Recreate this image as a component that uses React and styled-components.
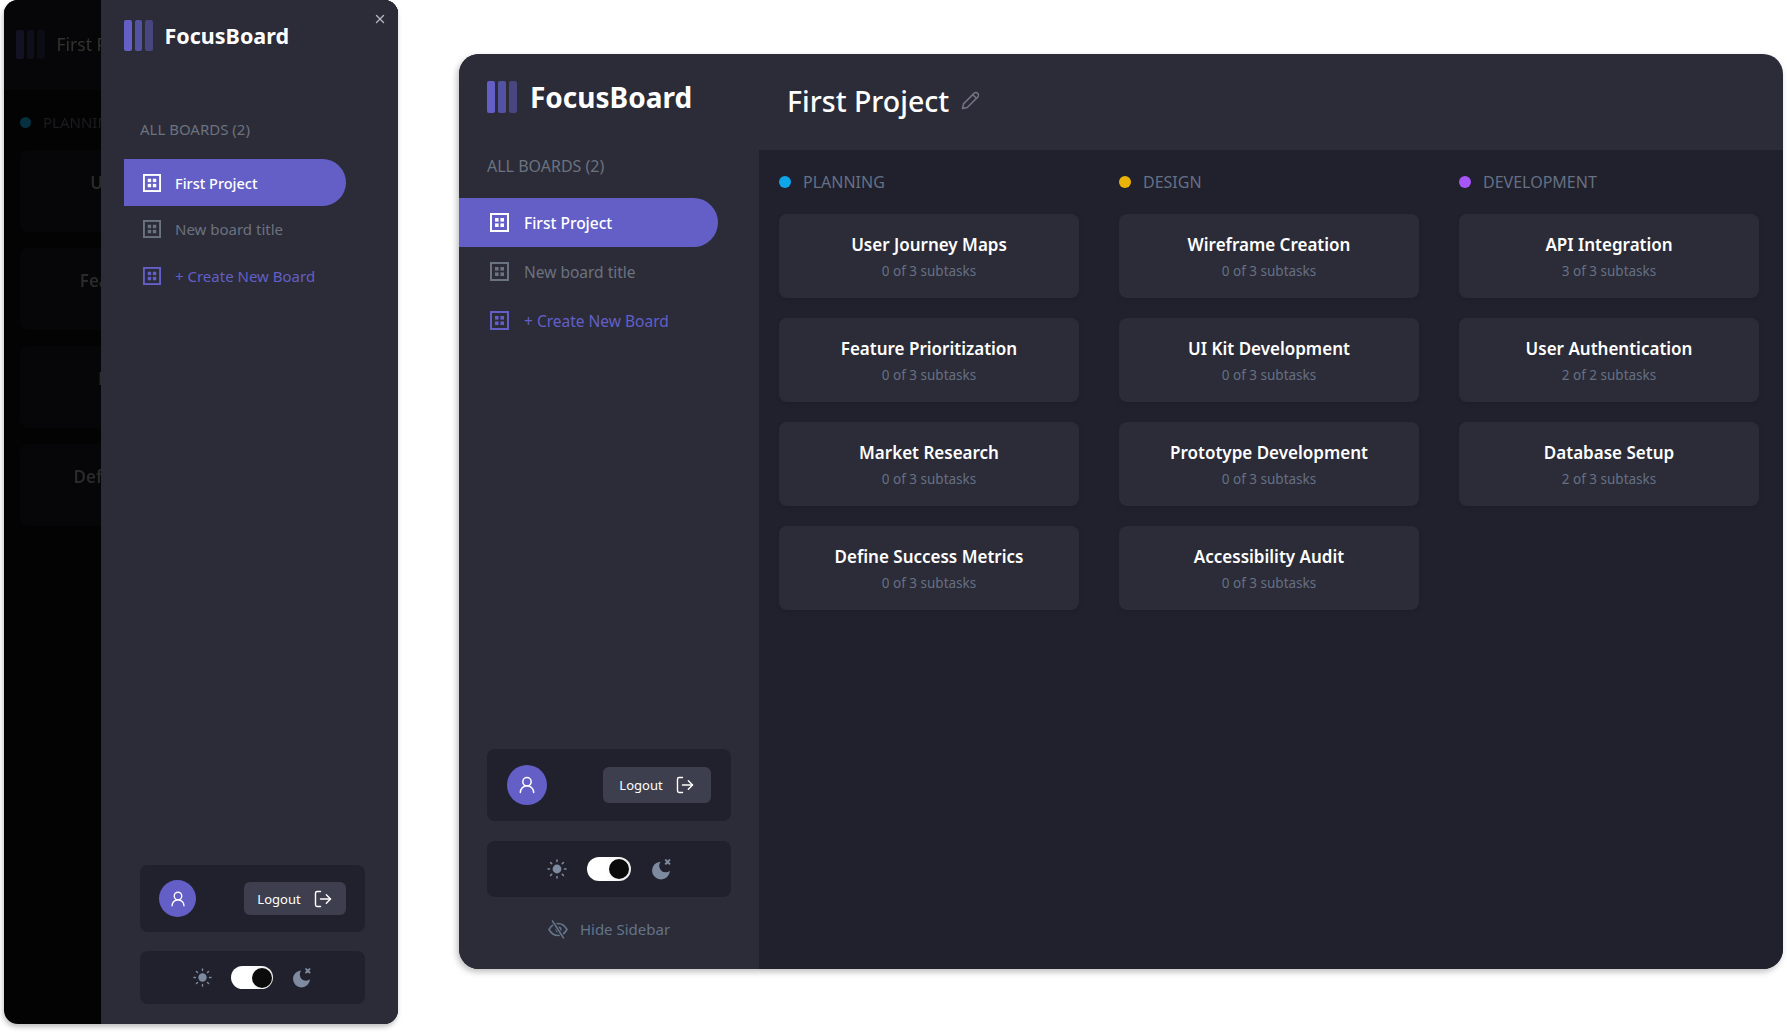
import React from 'react'
import styled, { createGlobalStyle } from 'styled-components'
import { LogOut, UserRound, X } from 'lucide-react'

const GlobalStyle = createGlobalStyle`
  html, body { margin: 0; padding: 0; background: #fff; }
  * { box-sizing: border-box; }
  body { font-family: "Noto Sans", "Open Sans", sans-serif; }
`

const columns = [
  {
    name: 'PLANNING', color: '#0ea5e9',
    tasks: [['User Journey Maps', '0 of 3 subtasks'], ['Feature Prioritization', '0 of 3 subtasks'], ['Market Research', '0 of 3 subtasks'], ['Define Success Metrics', '0 of 3 subtasks']],
  },
  {
    name: 'DESIGN', color: '#eab308',
    tasks: [['Wireframe Creation', '0 of 3 subtasks'], ['UI Kit Development', '0 of 3 subtasks'], ['Prototype Development', '0 of 3 subtasks'], ['Accessibility Audit', '0 of 3 subtasks']],
  },
  {
    name: 'DEVELOPMENT', color: '#a855f7',
    tasks: [['API Integration', '3 of 3 subtasks'], ['User Authentication', '2 of 2 subtasks'], ['Database Setup', '2 of 3 subtasks']],
  },
]

const BoardIcon = ({ size = 19 }) => (
  <svg width={size} height={size} viewBox="0 0 19 19" fill="none">
    <rect x="1" y="1" width="17" height="17" stroke="currentColor" strokeWidth="2" />
    <rect x="5" y="5" width="3.6" height="3.6" fill="currentColor" />
    <rect x="10.4" y="5" width="3.6" height="3.6" fill="currentColor" />
    <rect x="5" y="10.4" width="3.6" height="3.6" fill="currentColor" />
    <rect x="10.4" y="10.4" width="3.6" height="3.6" fill="currentColor" />
  </svg>
)

const SunIcon = ({ size = 20 }) => (
  <svg width={size} height={size} viewBox="0 0 20 20" fill="none" stroke="#7d8aa0" strokeWidth="1.5" strokeLinecap="round">
    <circle cx="10" cy="10" r="4.4" fill="#7d8aa0" stroke="none" />
    <path d="M10 1v1.6M10 17.4V19M1 10h1.6M17.4 10H19M3.6 3.6l1.2 1.2M15.2 15.2l1.2 1.2M3.6 16.4l1.2-1.2M15.2 4.8l1.2-1.2" />
  </svg>
)

const MoonIcon = ({ size = 21 }) => (
  <svg width={size} height={size} viewBox="1 0.5 19 20" fill="none">
    <path d="M9.76 3A8.5 8.5 0 1 0 18.5 11.74 6.2 6.2 0 0 1 9.76 3Z" fill="#7d8aa0" />
    <path d="M14.6 1.6l3.4 3.4M18 1.6l-3.4 3.4" stroke="#7d8aa0" strokeWidth="1.9" strokeLinecap="round" />
  </svg>
)

const PencilIcon = () => (
  <svg width="19" height="19" viewBox="0 0 19 19" fill="none" stroke="#6f7585" strokeWidth="1.5" strokeLinejoin="round">
    <path d="M1.5 17.5l1-4.6L13 2.4a2.6 2.6 0 0 1 3.7 3.7L6.2 16.5Z" />
    <path d="M11.8 3.7l3.6 3.6" />
  </svg>
)

const EyeSlashIcon = () => (
  <svg width="20" height="20" viewBox="0 0 20 20" fill="none" stroke="#64748b" strokeLinecap="round">
    <path d="M1 10.5C3.4 6.2 6.500 4.500 10 4.500s6.600 1.700 9 6c-2.400 4.300-5.500 6-9 6s-6.600-1.700-9-6Z" strokeWidth="1.6" />
    <circle cx="10.500" cy="10.500" r="3.100" fill="#64748b" stroke="none" />
    <path d="M4.500 2l11 17" stroke="#2b2c37" strokeWidth="3.400" />
    <path d="M4.500 2l11 17" strokeWidth="1.500" />
  </svg>
)

const Page = styled.div`
  display: flex;
  align-items: flex-start;
  gap: 61px;
  width: 1787px;
  height: 1032px;
  padding-left: 4px;
  overflow: hidden;
`

/* left: the phone sized view with the sidebar open */
const Phone = styled.div`
  position: relative;
  width: 394px;
  height: 1024px;
  flex-shrink: 0;
  border-radius: 14px;
  overflow: hidden;
  background: #030304;
  box-shadow: -1px 3px 5px rgba(0, 0, 0, 0.25);
  filter: blur(0.35px);
`
const DimHeader = styled.div`
  display: flex;
  align-items: center;
  gap: 12px;
  height: 90px;
  padding: 0 12px 2px;
  background: #060608;
`
const DimTitle = styled.span`
  color: #33332e;
  font-size: 17.5px;
  white-space: nowrap;
`
const DimColumn = styled.div`
  display: flex;
  flex-direction: column;
  gap: 16px;
  padding: 22px 16px;
  width: 328px;
`
const DimLabel = styled.div`
  display: flex;
  align-items: center;
  gap: 12px;
  height: 20px;
  margin-bottom: 2px;
  color: #1c1c20;
  font-size: 15px;
`
const DimDot = styled.span`
  width: 11px;
  height: 11px;
  border-radius: 50%;
  background: #04303f;
`
const DimCard = styled.div`
  display: flex;
  align-items: center;
  justify-content: center;
  width: 296px;
  height: 82px;
  padding-bottom: 18px;
  border-radius: 8px;
  background: #060608;
  color: #2a2a2a;
  font-size: 17px;
  font-weight: 600;
  white-space: nowrap;
`
const Overlay = styled.div`
  position: absolute;
  top: 0;
  bottom: 0;
  left: 97px;
  right: 0;
`
const CloseButton = styled.span`
  position: absolute;
  top: 12px;
  right: 11px;
  color: #b4b6bf;
  display: flex;
`

/* sidebar shared between both views */
const Side = styled.aside`
  display: flex;
  flex-direction: column;
  flex-shrink: 0;
  width: ${p => (p.$compact ? '297px' : '300px')};
  height: 100%;
  background: #2b2c37;
`
const Brand = styled.div`
  display: flex;
  align-items: center;
  gap: ${p => (p.$compact ? '12px' : '13px')};
  height: ${p => (p.$compact ? '31px' : '32px')};
  margin: ${p => (p.$compact ? '20px 0 0 23px' : '27px 0 0 28px')};
`
const Bars = styled.div`
  display: flex;
  gap: 3px;
  height: 100%;
`
const Bar = styled.span`
  width: ${p => (p.$compact ? '7.5px' : '8px')};
  border-radius: 2px;
  background: #635fc7;
  opacity: ${p => p.$o};
`
const BrandName = styled.span`
  color: #fff;
  font-weight: 700;
  font-size: ${p => (p.$compact ? '21.5px' : '28px')};
  line-height: 1;
`
const SideLabel = styled.div`
  color: #6b7280;
  font-size: ${p => (p.$compact ? '15px' : '16px')};
  line-height: 20px;
  margin: ${p => (p.$compact ? '68px 0 20px 39px' : '43px 0 22px 28px')};
`
const NavItem = styled.div`
  display: flex;
  align-items: center;
  gap: ${p => (p.$compact ? '14px' : '15px')};
  width: ${p => (p.$compact ? '222px' : '259px')};
  height: ${p => (p.$compact ? '47px' : '49px')};
  margin-left: ${p => (p.$compact ? '23px' : '0')};
  padding-left: ${p => (p.$compact ? '19px' : '31px')};
  padding-bottom: ${p => (p.$compact && !p.$active ? '2px' : '0')};
  border-radius: 0 30px 30px 0;
  font-size: ${p => (p.$compact ? (p.$active ? '14.5px' : '15px') : '15.5px')};
  font-weight: ${p => (p.$active ? 500 : 400)};
  background: ${p => (p.$active ? '#635fc7' : 'transparent')};
  color: ${p => (p.$active ? '#fff' : p.$create ? '#635fc7' : '#6b7280')};
`
const SideBottom = styled.div`
  display: flex;
  flex-direction: column;
  margin-top: auto;
  padding: ${p => (p.$compact ? '0 0 20px 39px' : '0 0 28px 28px')};
  gap: ${p => (p.$compact ? '19px' : '20px')};
`
const UserBox = styled.div`
  display: flex;
  align-items: center;
  justify-content: space-between;
  width: ${p => (p.$compact ? '225px' : '244px')};
  height: ${p => (p.$compact ? '67px' : '72px')};
  padding: ${p => (p.$compact ? '0 19px' : '0 20px')};
  border-radius: 8px;
  background: #20212c;
`
const Avatar = styled.div`
  display: flex;
  align-items: center;
  justify-content: center;
  width: ${p => (p.$compact ? '37px' : '40px')};
  height: ${p => (p.$compact ? '37px' : '40px')};
  border-radius: 50%;
  background: #635fc7;
  color: #fff;
`
const LogoutButton = styled.div`
  display: flex;
  align-items: center;
  justify-content: center;
  gap: 12px;
  width: ${p => (p.$compact ? '102px' : '108px')};
  height: ${p => (p.$compact ? '33px' : '36px')};
  border-radius: 6px;
  background: #3e3f4e;
  color: #fff;
  font-size: 13px;
`
const ThemeBox = styled.div`
  display: flex;
  align-items: center;
  justify-content: center;
  gap: ${p => (p.$compact ? '19px' : '20px')};
  width: ${p => (p.$compact ? '225px' : '244px')};
  height: ${p => (p.$compact ? '53px' : '56px')};
  border-radius: 8px;
  background: #20212c;
`
const Toggle = styled.div`
  display: flex;
  justify-content: flex-end;
  align-items: center;
  width: ${p => (p.$compact ? '42px' : '44px')};
  height: ${p => (p.$compact ? '23px' : '24px')};
  padding-right: 1.5px;
  border-radius: 12px;
  background: linear-gradient(90deg, #fff 40%, #ececec);
`
const Knob = styled.span`
  width: 20px;
  height: 20px;
  border-radius: 50%;
  background: #0b0b0b;
`
const HideRow = styled.div`
  display: flex;
  align-items: center;
  justify-content: center;
  gap: 12px;
  width: 244px;
  height: 24px;
  color: #64748b;
  font-size: 15px;
`

/* right: the desktop view */
const Win = styled.div`
  display: flex;
  flex-shrink: 0;
  width: 1324px;
  height: 915px;
  margin-top: 54px;
  border-radius: 20px;
  overflow: hidden;
  background: #2b2c37;
  box-shadow: -2px 3px 6px rgba(0, 0, 0, 0.25);
`
const Content = styled.main`
  display: flex;
  flex-direction: column;
  flex: 1;
  min-width: 0;
`
const Head = styled.header`
  display: flex;
  align-items: center;
  gap: 12px;
  height: 96px;
  padding: 0 0 2px 28px;
  color: #fff;
`
const Title = styled.h1`
  margin: 0;
  color: #fff;
  font-size: 28.5px;
  font-weight: 500;
`
const EditIcon = styled.span`
  display: flex;
  margin-top: -2px;
`
const Board = styled.section`
  display: flex;
  flex: 1;
  gap: 40px;
  padding: 22px 20px;
  background: #20212c;
`
const Column = styled.div`
  display: flex;
  flex-direction: column;
  width: 300px;
  gap: 20px;
`
const ColumnHead = styled.div`
  display: flex;
  align-items: center;
  gap: 12px;
  height: 20px;
  margin-bottom: 2px;
  color: #667085;
  font-size: 16px;
`
const Dot = styled.span`
  width: 12px;
  height: 12px;
  border-radius: 50%;
  background: ${p => p.$color};
`
const Card = styled.article`
  display: flex;
  flex-direction: column;
  align-items: center;
  justify-content: center;
  height: 84px;
  padding-top: 1px;
  border-radius: 8px;
  background: #2b2c37;
  box-shadow: 0 2px 4px rgba(0, 0, 0, 0.1);
`
const CardTitle = styled.div`
  color: #fff;
  font-size: 17px;
  font-weight: 600;
  line-height: 24px;
`
const CardSub = styled.div`
  margin-top: 5px;
  color: #667085;
  font-size: 13.5px;
  line-height: 18px;
`

const Sidebar = ({ compact, hideRow }) => (
  <Side $compact={compact}>
    <Brand $compact={compact}>
      <Bars>
        <Bar $compact={compact} $o={1} />
        <Bar $compact={compact} $o={0.75} />
        <Bar $compact={compact} $o={0.5} />
      </Bars>
      <BrandName $compact={compact}>FocusBoard</BrandName>
    </Brand>
    <SideLabel $compact={compact}>ALL BOARDS (2)</SideLabel>
    <NavItem $compact={compact} $active><BoardIcon size={compact ? 18 : 19} />First Project</NavItem>
    <NavItem $compact={compact}><BoardIcon size={compact ? 18 : 19} />New board title</NavItem>
    <NavItem $compact={compact} $create><BoardIcon size={compact ? 18 : 19} />+ Create New Board</NavItem>
    <SideBottom $compact={compact}>
      <UserBox $compact={compact}>
        <Avatar $compact={compact}><UserRound size={compact ? 18 : 20} strokeWidth={1.8} /></Avatar>
        <LogoutButton $compact={compact}>Logout <LogOut size={20} strokeWidth={1.7} /></LogoutButton>
      </UserBox>
      <ThemeBox $compact={compact}>
        <SunIcon size={compact ? 19 : 20} />
        <Toggle $compact={compact}><Knob $compact={compact} /></Toggle>
        <MoonIcon size={compact ? 20 : 21} />
      </ThemeBox>
      {hideRow && <HideRow><EyeSlashIcon />Hide Sidebar</HideRow>}
    </SideBottom>
  </Side>
)

export default function App() {
  return (
    <>
      <GlobalStyle />
      <Page>
        <Phone>
          <DimHeader>
            <Bars style={{ height: 29 }}>
              <Bar $compact $o={0.14} />
              <Bar $compact $o={0.1} />
              <Bar $compact $o={0.07} />
            </Bars>
            <DimTitle>First Project</DimTitle>
          </DimHeader>
          <DimColumn>
            <DimLabel><DimDot />PLANNING</DimLabel>
            {columns[0].tasks.map(([t]) => <DimCard key={t}>{t}</DimCard>)}
          </DimColumn>
          <Overlay>
            <Sidebar compact />
            <CloseButton><X size={14} strokeWidth={2.4} /></CloseButton>
          </Overlay>
        </Phone>

        <Win>
          <Sidebar hideRow />
          <Content>
            <Head>
              <Title>First Project</Title>
              <EditIcon><PencilIcon /></EditIcon>
            </Head>
            <Board>
              {columns.map(col => (
                <Column key={col.name}>
                  <ColumnHead><Dot $color={col.color} />{col.name}</ColumnHead>
                  {col.tasks.map(([title, sub]) => (
                    <Card key={title}>
                      <CardTitle>{title}</CardTitle>
                      <CardSub>{sub}</CardSub>
                    </Card>
                  ))}
                </Column>
              ))}
            </Board>
          </Content>
        </Win>
      </Page>
    </>
  )
}
